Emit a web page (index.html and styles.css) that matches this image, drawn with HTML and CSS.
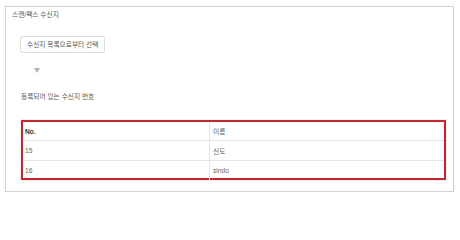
FILE: index.html
```html
<!DOCTYPE html>
<html lang="ko">
<head>
<meta charset="utf-8">
<link rel="stylesheet" href="styles.css">
</head>
<body>
<div class="panel">
  <div class="title">스캔/팩스 수신지</div>
  <div class="content">
    <div class="btn">수신지 목록으로부터 선택</div>
    <div class="arrow"><svg width="6" height="5" viewBox="0 0 6 5"><path d="M0 0H6L3 5Z" fill="#b4b4b4"/></svg></div>
    <div class="label">등록되어 있는 수신지 번호</div>
    <div class="highlight">
      <table class="list">
        <tr class="head"><td class="c1">No.</td><td class="c2">이름</td></tr>
        <tr><td class="c1">15</td><td class="c2">신도</td></tr>
        <tr><td class="c1">16</td><td class="c2">sindo</td></tr>
      </table>
    </div>
  </div>
</div>
</body>
</html>
```
FILE: styles.css
```css
html, body {
  margin: 0;
  padding: 0;
  background: #ffffff;
}
body {
  font-family: "Liberation Sans", "Noto Sans CJK KR", sans-serif;
  font-size: 6.7px;
  color: #5a5a5a;
}
.panel {
  box-sizing: border-box;
  margin: 6px 0 0 5px;
  width: 449px;
  height: 186px;
  border: 1px solid #d2d2d2;
  box-shadow: 0 0 1px rgba(0,0,0,0.12);
  padding: 3px 0 0 6px;
}
.title {
  line-height: 10px;
  height: 10px;
  color: #555;
}
.content {
  padding-left: 8px;
  display: flex;
  flex-direction: column;
  align-items: flex-start;
}
.btn {
  margin-top: 16px;
  box-sizing: border-box;
  height: 17px;
  line-height: 15px;
  padding: 0 6px 0 6px;
  border: 1px solid #dcdcdc;
  border-radius: 2px;
  color: #555;
}
.arrow {
  margin-top: 15px;
  margin-left: 14px;
  height: 5px;
  display: flex;
}
.label {
  margin-top: 19px;
  margin-left: 1px;
  line-height: 10px;
  height: 10px;
  color: #555;
}
.highlight {
  margin-top: 18px;
  margin-left: 1px;
  box-sizing: border-box;
  width: 425px;
  height: 60px;
  border: 2px solid #c4262e;
  box-shadow: 0 0 1px rgba(196,38,46,0.5);
}
.list {
  width: 100%;
  border-collapse: collapse;
  table-layout: fixed;
}
.list td {
  height: 19px;
  padding: 0 0 0 2px;
  border-top: 1px solid #e6e6e6;
  color: #666;
  vertical-align: middle;
}
.list tr:first-child td {
  border-top: none;
  height: 18px;
}
.list .c1 {
  width: 184px;
  border-right: 1px solid #e6e6e6;
}
.list .c2 {
  padding-left: 3px;
}
.list .head .c1 {
  font-weight: bold;
  color: #333;
}
```
